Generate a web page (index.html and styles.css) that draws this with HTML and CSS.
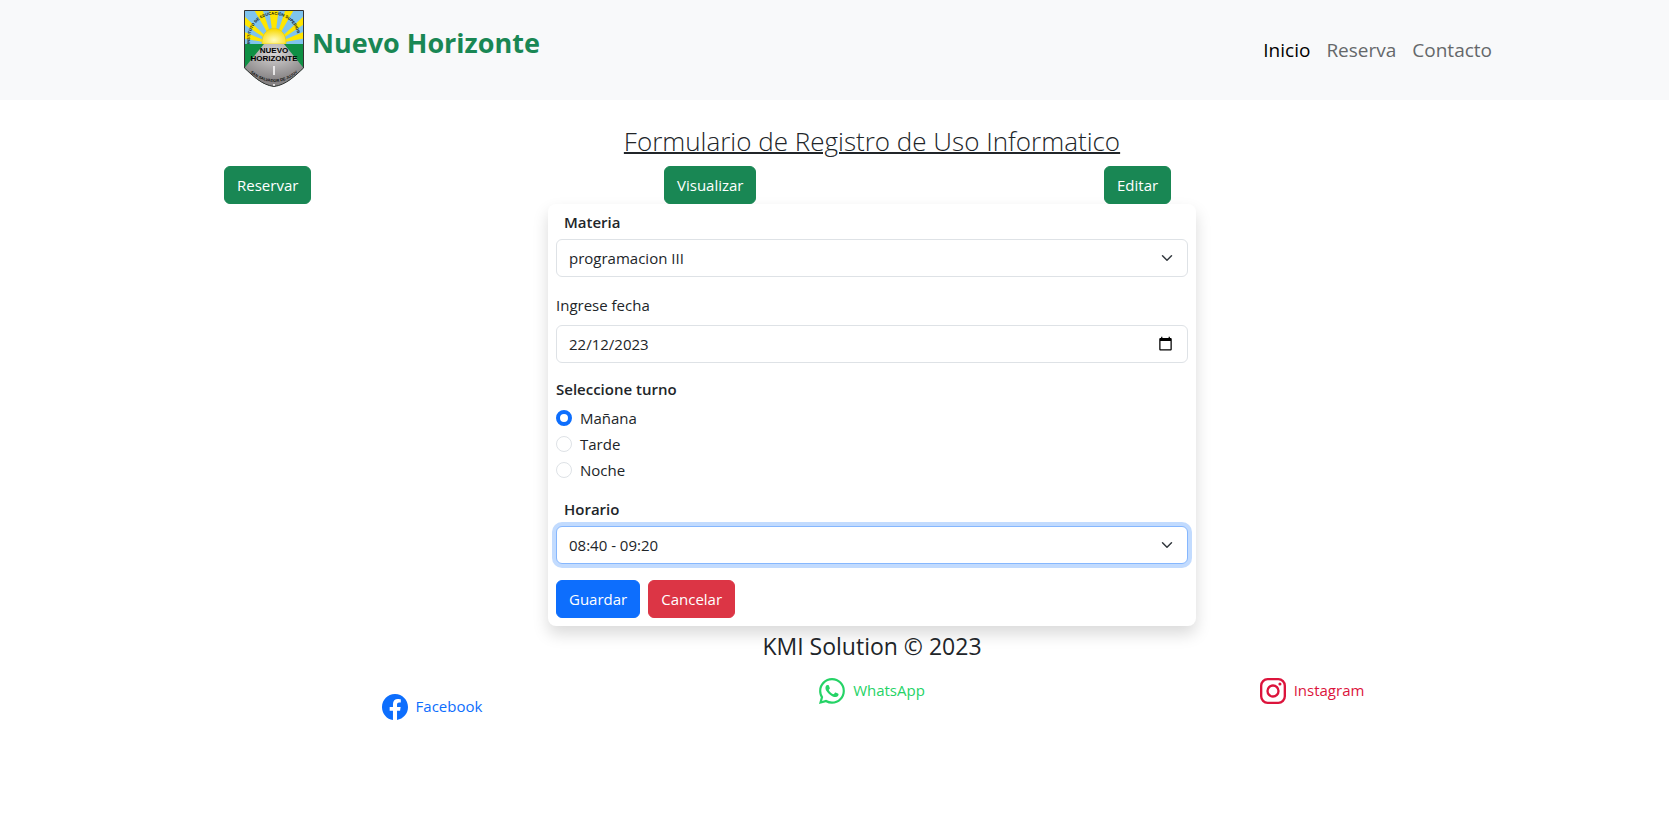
FILE: index.html
```html
<!DOCTYPE html>
<html lang="es">
<head>
<meta charset="utf-8">
<meta name="viewport" content="width=device-width, initial-scale=1">
<title>Nuevo Horizonte</title>
<link rel="stylesheet" href="styles.css">
</head>
<body>
<header class="navbar">
  <div class="container navbar-inner">
    <a class="brand" href="#">
      <svg class="brand-logo" viewBox="0 0 60 77" aria-hidden="true">
        <defs>
          <clipPath id="shield"><path d="M0.5 0.5H59.5V58C51 66 42 75 30 76.500C18 75 9 66 0.500 58Z"/></clipPath>
          <radialGradient id="sun" cx="50%" cy="75%" r="70%"><stop offset="0" stop-color="#fffcc0"/><stop offset="1" stop-color="#f8d800"/></radialGradient>
          <radialGradient id="road" cx="50%" cy="20%" r="65%"><stop offset="0" stop-color="#d8d6d6"/><stop offset="1" stop-color="#858283"/></radialGradient>
          <path id="arcTop" d="M6 34C3 -5 57 -5 54 34"/>
          <path id="arcBottom" d="M3 60Q30 84 57 60"/>
        </defs>
        <g clip-path="url(#shield)">
          <rect width="60" height="36" fill="#7fc4ee"/>
          <path fill="#ffe600" d="M30 34L25 -2H35ZM30 34L9 -2H18ZM30 34L42 -2H51ZM30 34L-2 4V13ZM30 34L62 4V13ZM30 34L-2 21V28ZM30 34L62 21V28Z"/>
          <path d="M18 34C17 13 43 13 42 34Z" fill="url(#sun)" stroke="#e8c400" stroke-width="0.500"/>
          <rect y="34" width="60" height="43" fill="#0f9044"/>
          <path d="M20 34H40L62 61V77H-2V61Z" fill="url(#road)"/>
          <path d="M30 56V65M30 74V77" stroke="#fff" stroke-width="1.500"/>
        </g>
        <path d="M0.5 0.5H59.5V58C51 66 42 75 30 76.500C18 75 9 66 0.500 58Z" fill="none" stroke="#333"/>
        <text class="logo-arc"><textPath href="#arcTop">INSTITUTO DE EDUCACIÓN SUPERIOR</textPath></text>
        <text class="logo-name" x="30" y="43">NUEVO</text>
        <text class="logo-name" x="30" y="51">HORIZONTE</text>
        <text class="logo-arc"><textPath href="#arcBottom" startOffset="50%" text-anchor="middle">SAN SALVADOR DE JUJUY</textPath></text>
      </svg>
      <span class="brand-name">Nuevo Horizonte</span>
    </a>
    <nav class="nav">
      <a class="nav-link active" href="#">Inicio</a>
      <a class="nav-link" href="#">Reserva</a>
      <a class="nav-link" href="#">Contacto</a>
    </nav>
  </div>
</header>

<div class="page">
  <div class="container">
    <main>
      <h1 class="title">Formulario de Registro de Uso Informatico</h1>
      <div class="columns actions">
        <div class="column"><button class="btn btn-success" type="button">Reservar</button></div>
        <div class="column"><button class="btn btn-success" type="button">Visualizar</button></div>
        <div class="column"><button class="btn btn-success" type="button">Editar</button></div>
      </div>
      <form class="card">
        <div class="field">
          <label class="heading indented" for="materia">Materia</label>
          <select class="control select" id="materia"><option>programacion III</option></select>
        </div>
        <div class="field">
          <label class="label" for="fecha">Ingrese fecha</label>
          <div class="date">
            <input class="control" id="fecha" type="text" value="22/12/2023">
            <svg class="date-icon" viewBox="0 0 24 24" aria-hidden="true"><path d="M20 3h-1V1h-2v2H7V1H5v2H4c-1.100 0-2 .9-2 2v16c0 1.100.9 2 2 2h16c1.100 0 2-.9 2-2V5c0-1.100-.9-2-2-2zm0 18H4V8h16v13z"/></svg>
          </div>
        </div>
        <fieldset class="field radios">
          <legend class="heading">Seleccione turno</legend>
          <div class="check"><input class="radio" type="radio" name="turno" id="manana" checked><label for="manana">Mañana</label></div>
          <div class="check"><input class="radio" type="radio" name="turno" id="tarde"><label for="tarde">Tarde</label></div>
          <div class="check"><input class="radio" type="radio" name="turno" id="noche"><label for="noche">Noche</label></div>
        </fieldset>
        <div class="field">
          <label class="heading indented" for="horario">Horario</label>
          <select class="control select focused" id="horario"><option>08:40 - 09:20</option></select>
        </div>
        <div class="buttons">
          <button class="btn btn-primary" type="submit">Guardar</button>
          <button class="btn btn-danger" type="button">Cancelar</button>
        </div>
      </form>
    </main>

    <footer>
      <p class="credit">KMI Solution © 2023</p>
      <div class="columns socials">
        <div class="column"><a class="social facebook" href="#">
          <svg class="social-icon" viewBox="0 0 16 16" aria-hidden="true"><path d="M16 8.049c0-4.446-3.582-8.050-8-8.050C3.580 0-.002 3.603-.002 8.050c0 4.017 2.926 7.347 6.750 7.951v-5.625h-2.030V8.050H6.750V6.275c0-2.017 1.195-3.131 3.022-3.131.876 0 1.791.157 1.791.157v1.980h-1.009c-.993 0-1.303.621-1.303 1.258v1.510h2.218l-.354 2.326H9.250V16c3.824-.604 6.750-3.934 6.750-7.951z"/></svg>
          Facebook</a></div>
        <div class="column"><a class="social whatsapp" href="#">
          <svg class="social-icon" viewBox="0 0 16 16" aria-hidden="true"><path d="M13.601 2.326A7.854 7.854 0 0 0 7.994 0C3.627 0 .068 3.558.064 7.926c0 1.399.366 2.760 1.057 3.965L0 16l4.204-1.102a7.933 7.933 0 0 0 3.790.965h.004c4.368 0 7.926-3.558 7.930-7.930A7.898 7.898 0 0 0 13.600 2.326zM7.994 14.521a6.573 6.573 0 0 1-3.356-.920l-.240-.144-2.494.654.666-2.433-.156-.251a6.560 6.560 0 0 1-1.007-3.505c0-3.626 2.957-6.584 6.591-6.584a6.560 6.560 0 0 1 4.660 1.931 6.557 6.557 0 0 1 1.928 4.660c-.004 3.639-2.961 6.592-6.592 6.592zm3.615-4.934c-.197-.099-1.170-.578-1.353-.646-.182-.065-.315-.099-.445.099-.133.197-.513.646-.627.775-.114.133-.232.148-.430.050-.197-.100-.836-.308-1.592-.985-.590-.525-.985-1.175-1.103-1.372-.114-.198-.011-.304.088-.403.087-.088.197-.232.296-.346.100-.114.133-.198.198-.330.065-.134.034-.248-.015-.347-.050-.099-.445-1.076-.612-1.470-.160-.389-.323-.335-.445-.340-.114-.007-.247-.007-.380-.007a.729.729 0 0 0-.529.247c-.182.198-.691.677-.691 1.654 0 .977.710 1.916.810 2.049.098.133 1.394 2.132 3.383 2.992.470.205.840.326 1.129.418.475.152.904.129 1.246.080.380-.058 1.171-.480 1.338-.943.164-.464.164-.860.114-.943-.049-.084-.182-.133-.380-.232z"/></svg>
          WhatsApp</a></div>
        <div class="column"><a class="social instagram" href="#">
          <svg class="social-icon" viewBox="0 0 16 16" aria-hidden="true"><path d="M4.700 0H11.300A4.700 4.700 0 0 1 16 4.700V11.300A4.700 4.700 0 0 1 11.300 16H4.700A4.700 4.700 0 0 1 0 11.300V4.700A4.700 4.700 0 0 1 4.700 0ZM4.700 1.440A3.260 3.260 0 0 0 1.440 4.700V11.300A3.260 3.260 0 0 0 4.700 14.560H11.300A3.260 3.260 0 0 0 14.560 11.300V4.700A3.260 3.260 0 0 0 11.300 1.440ZM8 3.892a4.108 4.108 0 1 1 0 8.216 4.108 4.108 0 0 1 0-8.216Zm0 1.441a2.667 2.667 0 1 0 0 5.334 2.667 2.667 0 0 0 0-5.334ZM12.270 2.770a.96.96 0 1 1 0 1.920.96.96 0 0 1 0-1.920Z" fill-rule="evenodd"/></svg>
          Instagram</a></div>
      </div>
    </footer>
  </div>
</div>
</body>
</html>
```
FILE: styles.css
```css
*, *::before, *::after { box-sizing: border-box; }

body {
  margin: 0;
  background: #fff;
  color: #212529;
  font: 400 15px/24px "Open Sans", "Noto Sans", sans-serif;
}

a { text-decoration: none; }

.container { width: 100%; max-width: 1320px; margin: 0 auto; }
.navbar { padding-left: 75px; background: #f8f9fa; }
.navbar-inner {
  display: flex;
  align-items: center;
  justify-content: space-between;
  min-height: 100px;
  padding: 8px 32px;
}
.brand { display: flex; gap: 8px; padding-bottom: 3px; color: #198754; }
.brand-logo { width: 60px; height: 77px; }
.brand-name { padding-top: 14px; font-size: 27px; font-weight: 700; line-height: 38px; }
.logo-arc { font: 700 4px "Liberation Sans Narrow", "Liberation Sans", sans-serif; fill: #111; }
.logo-name { font: 700 8px "Liberation Sans", sans-serif; fill: #000; text-anchor: middle; }

.nav { display: flex; }
.nav-link { padding: 8px; color: #65686a; font-size: 19px; line-height: 30px; }
.nav-link.active { color: #000; }

.page { padding: 24px 0 0 75px; }

.title {
  margin: 0 0 8px;
  font-size: 26px;
  font-weight: 300;
  line-height: 34px;
  text-align: center;
  text-decoration: underline;
  text-decoration-thickness: 2px;
}

.columns { display: grid; grid-template-columns: repeat(3, 1fr); }
.column { padding: 0 12px; }

.btn {
  padding: 6px 12px;
  border: 1px solid;
  border-radius: 6px;
  color: #fff;
  font: inherit;
  cursor: pointer;
}
.actions .btn { display: block; }
.btn-success { background: #198754; border-color: #198754; }
.btn-primary { background: #0d6efd; border-color: #0d6efd; }
.btn-danger { background: #dc3545; border-color: #dc3545; }

.card {
  max-width: 648px;
  margin: 0 auto;
  padding: 8px;
  border-radius: 8px;
  box-shadow: 0 8px 16px rgba(0, 0, 0, 0.15);
}
.field { margin: 0 0 16px; padding: 0; border: 0; }
.heading { display: block; margin-bottom: 7px; padding: 0; font-weight: 600; line-height: 20px; }
.indented { padding-left: 8px; }
.label { display: block; margin-bottom: 8px; }
.control {
  display: block;
  width: 100%;
  height: 38px;
  padding: 6px 12px;
  border: 1px solid #dee2e6;
  border-radius: 6px;
  background-color: #fff;
  color: inherit;
  font: inherit;
}
.select {
  appearance: none;
  background-image: url("data:image/svg+xml,%3csvg xmlns='http://www.w3.org/2000/svg' viewBox='0 0 16 16'%3e%3cpath fill='none' stroke='%23343a40' stroke-linecap='round' stroke-linejoin='round' stroke-width='2' d='m2 5 6 6 6-6'/%3e%3c/svg%3e");
  background-repeat: no-repeat;
  background-position: right 12px center;
  background-size: 16px 12px;
}
.focused { border-color: #86b7fe; box-shadow: 0 0 0 4px rgba(13, 110, 253, 0.25); }
.date { position: relative; }
.date-icon { position: absolute; top: 11px; right: 15px; width: 15px; height: 15px; }

.radios { margin-bottom: 15px; }
.check { display: flex; gap: 8px; margin-bottom: 2px; }
.radio {
  appearance: none;
  width: 16px;
  height: 16px;
  margin: 4px 0 0;
  border: 1px solid #dee2e6;
  border-radius: 50%;
}
.radio:checked { border: 4px solid #0d6efd; }
.buttons { display: flex; gap: 8px; }

.credit { margin: 0 0 16px; padding-top: 4px; font-size: 23px; line-height: 32px; text-align: center; }
.socials { text-align: center; }
.social { display: inline-flex; gap: 8px; }
.social-icon { width: 26px; height: 26px; fill: currentColor; }
.facebook { margin-top: 16px; color: #0d6efd; }
.whatsapp { color: #25d366; }
.instagram { color: #dc143c; }
```
